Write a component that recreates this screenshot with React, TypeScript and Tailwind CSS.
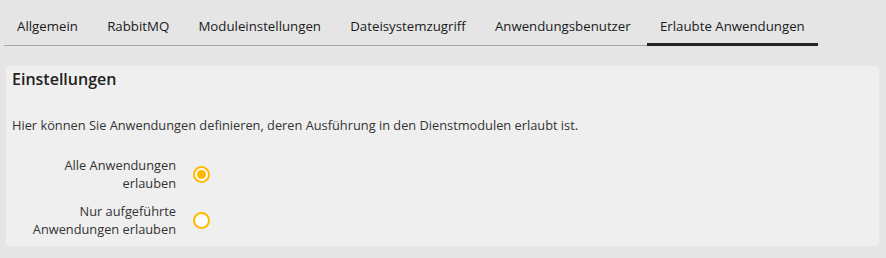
import React from 'react';

const tabs = [
  'Allgemein',
  'RabbitMQ',
  'Moduleinstellungen',
  'Dateisystemzugriff',
  'Anwendungsbenutzer',
  'Erlaubte Anwendungen',
];

const options = [
  { id: 'all', label: 'Alle Anwendungen erlauben', checked: true },
  { id: 'listed', label: 'Nur aufgeführte Anwendungen erlauben', checked: false },
];

const Radio = ({ checked }: { checked: boolean }) => (
  <span className="flex h-[17px] w-[17px] shrink-0 items-center justify-center rounded-full border-2 border-[#ffb900] bg-white">
    {checked && <span className="h-[9px] w-[9px] rounded-full bg-[#ffb900]" />}
  </span>
);

export default function App() {
  const active = 'Erlaubte Anwendungen';

  return (
    <div className="min-h-[258px] w-full bg-[#e5e5e5] font-['Open_Sans',sans-serif] text-[12.8px] leading-[18px] text-[#222]">
      <div className="ml-[4px] flex w-fit gap-[3.25px] border-b border-[#a8a8a8] text-[13.25px] text-[#1a1a1a]">
        {tabs.map((tab) =>
          tab === active ? (
            <div
              key={tab}
              className="-mb-px border-b-[3px] border-[#222] px-[13px] pt-[17px] pb-[8px]"
            >
              {tab}
            </div>
          ) : (
            <div key={tab} className="px-[13px] pt-[17px] pb-[10px]">
              {tab}
            </div>
          )
        )}
      </div>

      <div className="mt-[20px] mr-[7px] ml-[6px] rounded-[4px] bg-[#efefef] px-[6px] pt-[2px] pb-[8px]">
        <h2 className="text-[16px] leading-[22px] font-semibold text-[#222]">Einstellungen</h2>
        <p className="mt-[26px] text-[#333]">
          Hier können Sie Anwendungen definieren, deren Ausführung in den Dienstmodulen erlaubt ist.
        </p>
        <div className="mt-[22px] flex flex-col gap-[10px]">
          {options.map((opt) => (
            <div key={opt.id} className="flex items-center">
              <div className="w-[164px] pl-[14px] text-right text-[#333]">{opt.label}</div>
              <div className="ml-[17px]">
                <Radio checked={opt.checked} />
              </div>
            </div>
          ))}
        </div>
      </div>
    </div>
  );
}
